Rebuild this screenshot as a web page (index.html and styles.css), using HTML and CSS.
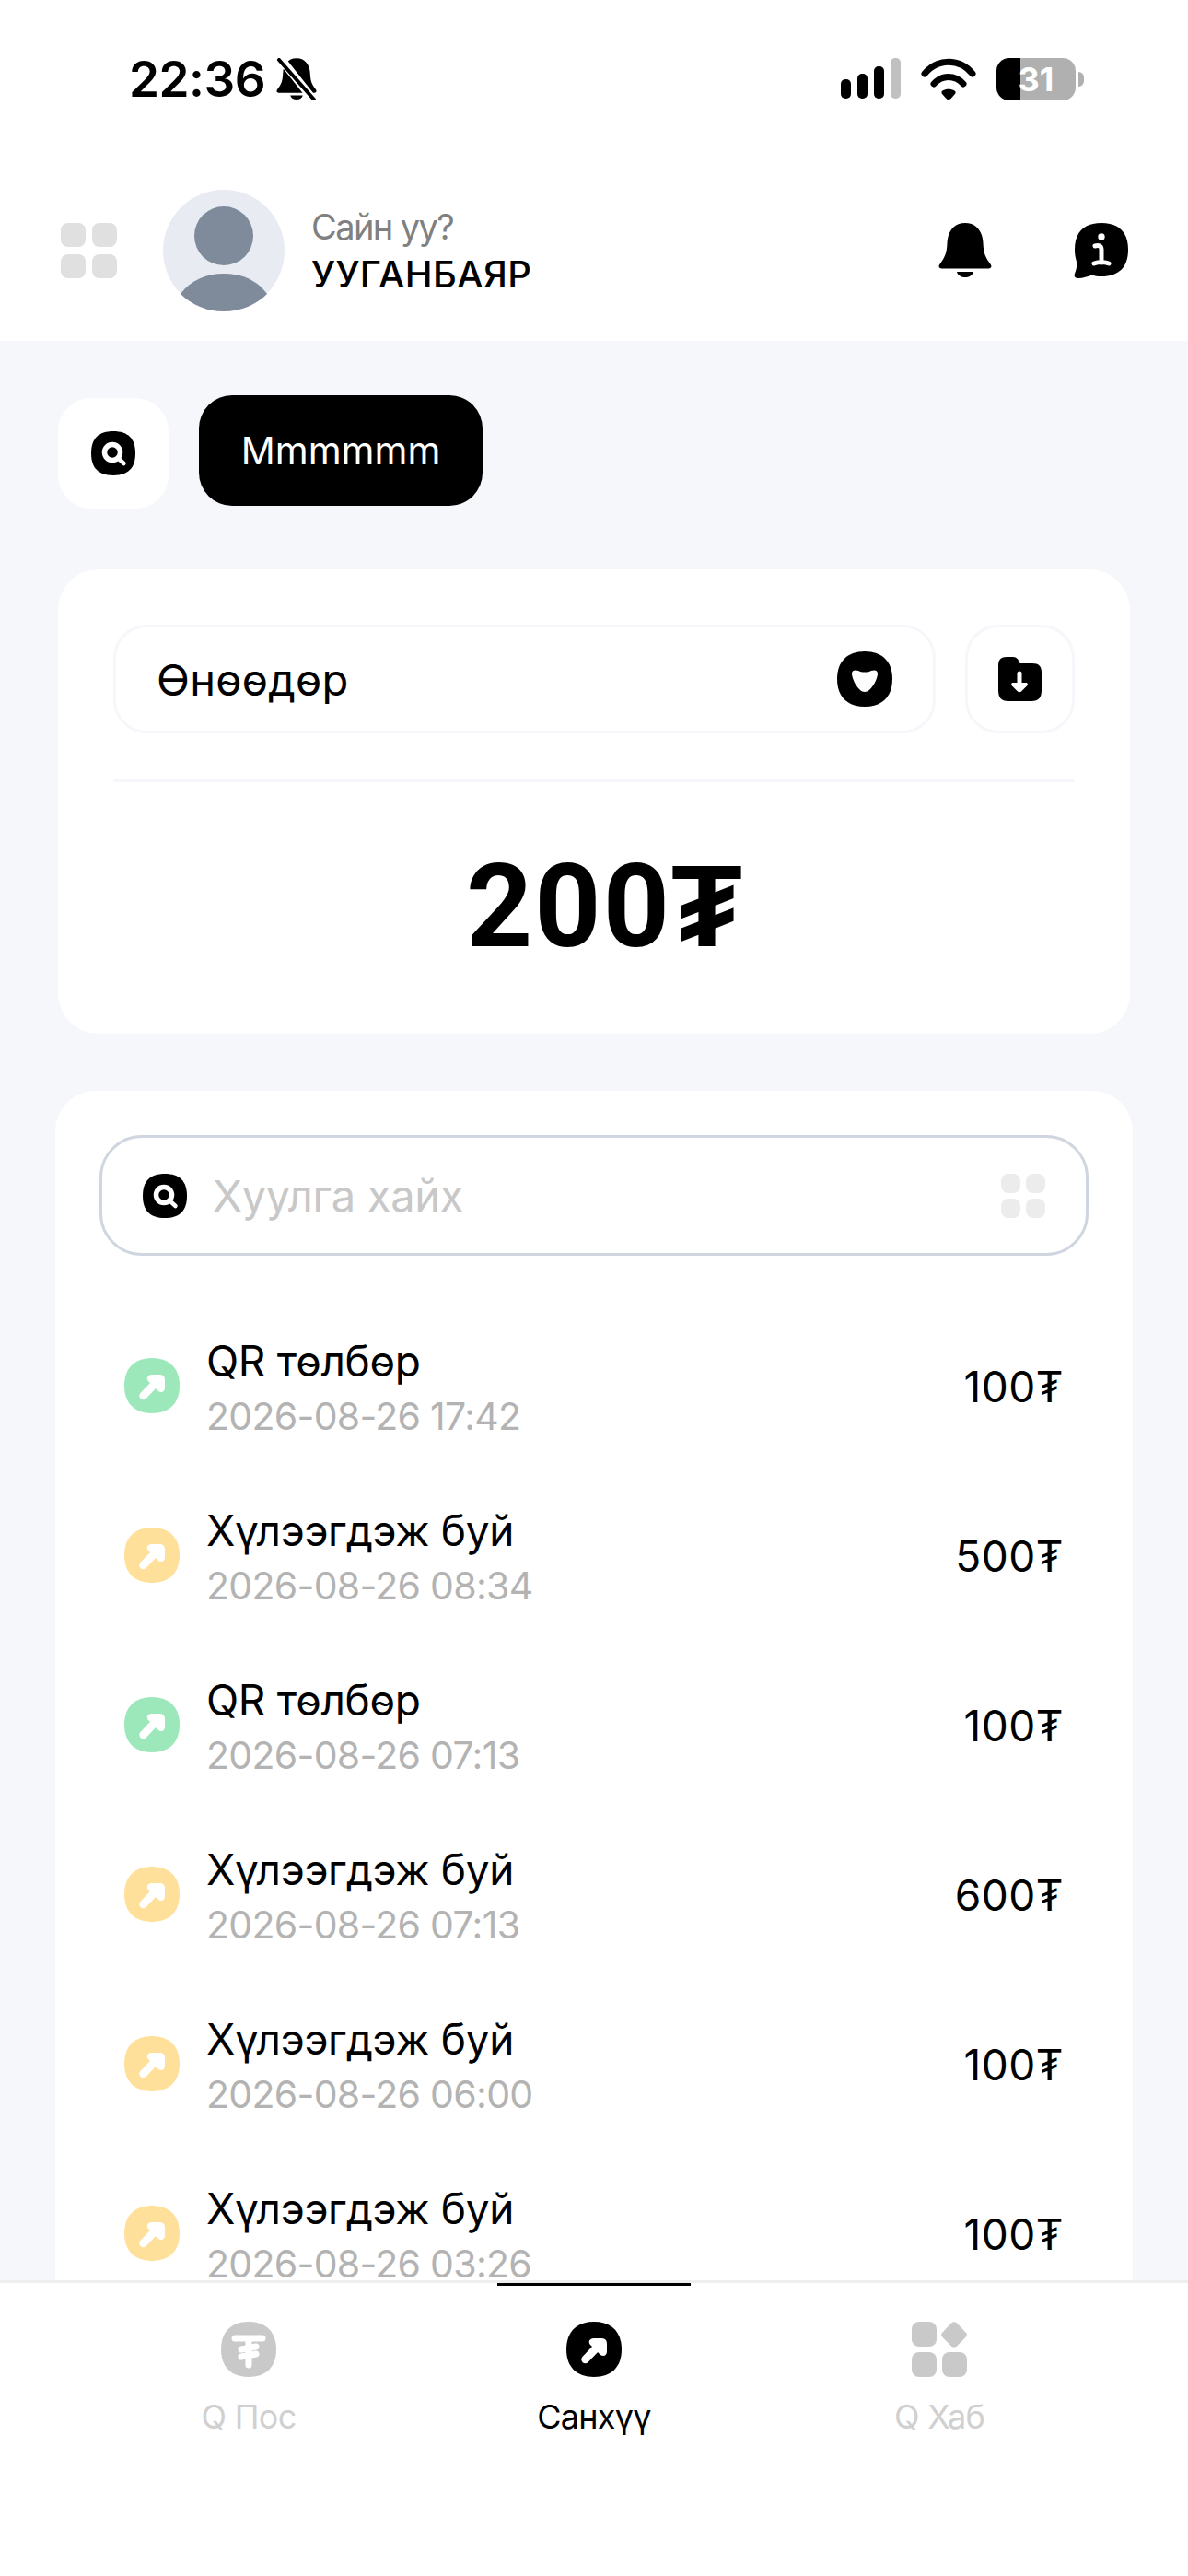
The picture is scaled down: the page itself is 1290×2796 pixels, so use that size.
FILE: index.html
```html
<!DOCTYPE html>
<html lang="mn">
<head>
    <meta charset="UTF-8">
    <meta name="viewport" content="width=device-width, initial-scale=1.0">
    <title>Санхүү</title>
    <link rel="stylesheet" href="styles.css">
</head>
<body>
    <!-- shared icons -->
    <svg class="defs" xmlns="http://www.w3.org/2000/svg">
        <symbol id="q" viewBox="0 0 48 48">
            <path d="M24 0C40 0 48 8 48 24C48 40 40 48 24 48C8 48 0 40 0 24C0 8 8 0 24 0Z"/>
            <circle cx="23" cy="23" r="8.500" fill="none" stroke="#fff" stroke-width="5.500"/>
            <path d="M30 30L35.500 35" fill="none" stroke="#fff" stroke-width="4.500" stroke-linecap="round"/>
        </symbol>
        <symbol id="arrow" viewBox="0 0 60 60">
            <path d="M30 0C49 0 60 11 60 30C60 49 49 60 30 60C11 60 0 49 0 30C0 11 11 0 30 0Z"/>
            <path d="M20.500 41L31 30" fill="none" stroke="#fff" stroke-width="8.500" stroke-linecap="round"/>
            <path d="M30 18H38C42 18 44 20 44 24V32C44 36.500 40.500 38.500 37 36L26.500 25.500C23 22 25 18 30 18Z" fill="#fff"/>
        </symbol>
        <symbol id="bell" viewBox="0 0 58 60">
            <path d="M29 0C42 0 48 10 48.500 22C49 33 51 37 56 44C59 48 57 49.500 53 49.500H5C1 49.500 -1 48 2 44C7 37 9 33 9.500 22C10 10 16 0 29 0Z"/>
            <path d="M20 53H38C36 61 22 61 20 53Z"/>
        </symbol>
    </svg>

    <div class="screen">
        <header class="top">
            <div class="status">
                <div class="status-left">
                    <span class="time">22:36</span>
                    <svg class="mute" viewBox="0 0 44 46">
                        <use href="#bell" x="0" y="0" width="44" height="46"/>
                        <path d="M5 1L40 45" stroke="#fff" stroke-width="9"/>
                        <path d="M3 2L41 45" stroke="#000" stroke-width="4" stroke-linecap="round"/>
                    </svg>
                </div>
                <div class="status-right">
                    <div class="signal"><i></i><i></i><i></i><i></i></div>
                    <svg class="wifi" viewBox="0 0 60 45">
                        <path d="M4 17C18 0 42 0 56 17" fill="none" stroke="#000" stroke-width="7" stroke-linecap="round"/>
                        <path d="M14 28C23 18 37 18 46 28" fill="none" stroke="#000" stroke-width="7" stroke-linecap="round"/>
                        <path d="M30 45C29 45 28 44.500 27 43.500L23.500 39.500C22 38 22 36.500 23.500 35.500C27 33 33 33 36.500 35.500C38 36.500 38 38 36.500 39.500L33 43.500C32 44.500 31 45 30 45Z"/>
                    </svg>
                    <div class="battery">31</div>
                </div>
            </div>
            <div class="user-row">
                <div class="dots">
                    <i></i><i></i><i></i><i></i>
                </div>
                <svg class="avatar" viewBox="0 0 132 132">
                    <circle cx="66" cy="66" r="66" fill="#e8ebf2"/>
                    <ellipse cx="66" cy="50" rx="32" ry="32" fill="#7f8a9b"/>
                    <path d="M19 113C30 98 47 91 66 91C85 91 102 98 113 113C101 125 84 132 66 132C48 132 31 125 19 113Z" fill="#7f8a9b"/>
                </svg>
                <div class="user-text">
                    <span class="hello">Сайн уу?</span>
                    <span class="user-name">УУГАНБАЯР</span>
                </div>
                <div class="top-actions">
                    <svg class="top-icon"><use href="#bell"/></svg>
                    <svg class="top-icon" viewBox="0 0 60 60">
                        <path d="M31 0C50 0 60 10 60 29C60 48 50 58 31 58C27 58 24 57.500 21 56.500C16 58 11 60 6 60C2 60 1 58 2 55C4 50 5 45 3.500 40C2.500 37 2 33 2 29C2 10 12 0 31 0Z"/>
                        <circle cx="31" cy="15" r="3.700" fill="#fff"/>
                        <path d="M24 25C28 24 31 24.500 31 29V43M23 44C28 42 34 42 39 44" fill="none" stroke="#fff" stroke-width="5" stroke-linecap="round"/>
                    </svg>
                </div>
            </div>
        </header>

        <main class="main">
            <div class="chips">
                <div class="chip-search"><svg class="icon-q"><use href="#q"/></svg></div>
                <div class="chip-store">Mmmmmm</div>
            </div>

            <section class="card card-total">
                <div class="filter-row">
                    <div class="filter">
                        <span>Өнөөдөр</span>
                        <svg class="filter-icon" viewBox="0 0 60 60">
                            <path d="M30 0C49 0 60 11 60 30C60 49 49 60 30 60C11 60 0 49 0 30C0 11 11 0 30 0Z"/>
                            <path d="M16 24C16 20 20 20 23 21C27 23 33 23 37 21C40 20 44 20 44 24C44 30 37 44 30 44C23 44 16 30 16 24Z" fill="#fff"/>
                        </svg>
                    </div>
                    <div class="export">
                        <svg class="export-icon" viewBox="0 0 47 48">
                            <path d="M0 9C0 3 3 0 9 0H16C20 0 22 3 23.500 7H37C44 7 47 10 47 17V36C47 44 44 48 36 48H11C3 48 0 44 0 36Z"/>
                            <path d="M23 18V30" fill="none" stroke="#fff" stroke-width="5" stroke-linecap="round"/>
                            <path d="M16 28H30C32 28 32.500 30 31 31.500L25 37.500C24 38.500 22 38.500 21 37.500L15 31.500C13.500 30 14 28 16 28Z" fill="#fff"/>
                        </svg>
                    </div>
                </div>
                <div class="total">200₮</div>
            </section>

            <section class="card card-list">
                <div class="search">
                    <svg class="icon-q"><use href="#q"/></svg>
                    <span class="placeholder">Хуулга хайх</span>
                    <div class="dots dots-small">
                        <i></i><i></i><i></i><i></i>
                    </div>
                </div>
                <div class="rows">
                    <div class="row">
                        <svg class="row-icon green"><use href="#arrow"/></svg>
                        <div class="row-text"><span class="row-title">QR төлбөр</span><span class="row-date">2026-08-26 17:42</span></div>
                        <span class="row-amount">100₮</span>
                    </div>
                    <div class="row">
                        <svg class="row-icon yellow"><use href="#arrow"/></svg>
                        <div class="row-text"><span class="row-title">Хүлээгдэж буй</span><span class="row-date">2026-08-26 08:34</span></div>
                        <span class="row-amount">500₮</span>
                    </div>
                    <div class="row">
                        <svg class="row-icon green"><use href="#arrow"/></svg>
                        <div class="row-text"><span class="row-title">QR төлбөр</span><span class="row-date">2026-08-26 07:13</span></div>
                        <span class="row-amount">100₮</span>
                    </div>
                    <div class="row">
                        <svg class="row-icon yellow"><use href="#arrow"/></svg>
                        <div class="row-text"><span class="row-title">Хүлээгдэж буй</span><span class="row-date">2026-08-26 07:13</span></div>
                        <span class="row-amount">600₮</span>
                    </div>
                    <div class="row">
                        <svg class="row-icon yellow"><use href="#arrow"/></svg>
                        <div class="row-text"><span class="row-title">Хүлээгдэж буй</span><span class="row-date">2026-08-26 06:00</span></div>
                        <span class="row-amount">100₮</span>
                    </div>
                    <div class="row">
                        <svg class="row-icon yellow"><use href="#arrow"/></svg>
                        <div class="row-text"><span class="row-title">Хүлээгдэж буй</span><span class="row-date">2026-08-26 03:26</span></div>
                        <span class="row-amount">100₮</span>
                    </div>
                </div>
            </section>
        </main>

        <nav class="nav">
            <div class="nav-item">
                <svg class="nav-icon" viewBox="0 0 60 60">
                    <path d="M30 0C49 0 60 11 60 30C60 49 49 60 30 60C11 60 0 49 0 30C0 11 11 0 30 0Z" fill="#c9c9c9"/>
                    <path d="M15 18H45M30 18V47M22 30L38 27M22 38L38 35" fill="none" stroke="#fff" stroke-width="7" stroke-linecap="round"/>
                </svg>
                <span>Q Пос</span>
            </div>
            <div class="nav-item active">
                <svg class="nav-icon"><use href="#arrow"/></svg>
                <span>Санхүү</span>
            </div>
            <div class="nav-item">
                <svg class="nav-icon" viewBox="0 0 60 60">
                    <g fill="#c9c9c9">
                        <rect x="0" y="0" width="27" height="27" rx="8"/>
                        <rect x="0" y="33" width="27" height="27" rx="8"/>
                        <rect x="33" y="33" width="27" height="27" rx="8"/>
                        <path d="M42.500 2C44.500 -0.500 47.500 -0.500 49.500 2L58 11C60.500 13 60.500 15 58 17.500L49.500 26C47.500 28 44.500 28 42.500 26L34 17.500C31.500 15 31.500 13 34 11Z"/>
                    </g>
                </svg>
                <span>Q Хаб</span>
            </div>
        </nav>
    </div>
</body>
</html>
```

FILE: styles.css
```css
* {
    margin: 0;
    padding: 0;
    box-sizing: border-box;
}

body {
    font-family: 'Inter', 'Noto Sans', sans-serif;
    color: #000;
    background: #f5f7fb;
}

.defs {
    display: none;
}

.screen {
    width: 1290px;
    height: 2796px;
    display: flex;
    flex-direction: column;
    overflow: hidden;
}

/* Status bar and user row */
.top {
    height: 370px;
    flex-shrink: 0;
    background: #fff;
}

.status {
    height: 206px;
    padding: 63px 122px 0 140px;
    display: flex;
    justify-content: space-between;
    align-items: flex-start;
}

.status-left {
    display: flex;
    align-items: center;
    gap: 12px;
    height: 46px;
}

.time {
    font-size: 53px;
    font-weight: 600;
    line-height: 46px;
    letter-spacing: -0.5px;
}

.mute {
    width: 44px;
    height: 46px;
}

.status-right {
    display: flex;
    align-items: flex-start;
}

.signal {
    display: flex;
    align-items: flex-end;
    gap: 7px;
    height: 44px;
    margin-right: 22px;
}

.signal i {
    display: block;
    width: 11px;
    border-radius: 5px;
    background: #000;
}

.signal i:nth-child(1) { height: 21px; }
.signal i:nth-child(2) { height: 27px; }
.signal i:nth-child(3) { height: 35px; }
.signal i:nth-child(4) { height: 44px; background: #c0c0c0; }

.wifi {
    width: 60px;
    height: 45px;
    margin-right: 22px;
}

.battery {
    position: relative;
    width: 86px;
    height: 46px;
    border-radius: 14px;
    background: linear-gradient(90deg, #000 26px, #b0b0b0 26px);
    color: #fff;
    font-size: 36px;
    font-weight: 700;
    line-height: 46px;
    text-align: center;
}

.battery::after {
    content: '';
    position: absolute;
    left: 89px;
    top: 15px;
    width: 6px;
    height: 16px;
    border-radius: 0 6px 6px 0;
    background: #b0b0b0;
}

.user-row {
    display: flex;
    align-items: center;
    padding: 0 65px 0 66px;
    height: 132px;
}

.dots {
    display: grid;
    grid-template-columns: 27px 27px;
    grid-auto-rows: 26px;
    gap: 8px 7px;
}

.dots i {
    display: block;
    background: #e0e0e0;
    border-radius: 8px;
}

.avatar {
    width: 132px;
    height: 132px;
    margin-left: 50px;
}

.user-text {
    display: flex;
    flex-direction: column;
    margin-left: 29px;
    flex: 1;
}

.hello {
    font-size: 38px;
    line-height: 50px;
    color: #808080;
    letter-spacing: -1.6px;
}

.user-name {
    font-size: 40px;
    font-weight: 500;
    line-height: 50px;
    margin-top: 2px;
    letter-spacing: 0.4px;
}

.top-actions {
    display: flex;
    align-items: center;
    gap: 87px;
}

.top-icon {
    width: 60px;
    height: 60px;
}

/* Main area */
.main {
    flex: 1;
    min-height: 0;
    overflow: hidden;
    padding-top: 59px;
}

.chips {
    display: flex;
    align-items: flex-start;
    gap: 33px;
    padding-left: 63px;
}

.chip-search {
    width: 120px;
    height: 120px;
    margin-top: 3px;
    display: flex;
    align-items: center;
    justify-content: center;
    background: #fff;
    border-radius: 36px;
}

.icon-q {
    width: 48px;
    height: 48px;
    flex-shrink: 0;
}

.chip-store {
    width: 308px;
    height: 120px;
    display: flex;
    align-items: center;
    justify-content: center;
    background: #000;
    color: #fff;
    border-radius: 36px;
    font-size: 41px;
}

.card {
    background: #fff;
    border-radius: 44px;
}

.card-total {
    height: 504px;
    margin: 66px 63px 0;
    padding: 60px 60px 0;
}

.filter-row {
    display: flex;
    gap: 32px;
    padding-bottom: 50px;
    border-bottom: 3px solid #f5f7fb;
}

.filter {
    flex: 1;
    height: 118px;
    display: flex;
    align-items: center;
    justify-content: space-between;
    padding: 0 44px 0 44px;
    border: 3px solid #f5f7fb;
    border-radius: 36px;
    font-size: 47px;
    letter-spacing: 0.3px;
}

.filter-icon {
    width: 60px;
    height: 60px;
}

.export {
    width: 119px;
    height: 118px;
    display: flex;
    align-items: center;
    justify-content: center;
    border: 3px solid #f5f7fb;
    border-radius: 36px;
}

.export-icon {
    width: 47px;
    height: 48px;
}

.total {
    margin-top: 62px;
    padding-left: 24px;
    text-align: center;
    font-family: 'Roboto', sans-serif;
    font-size: 126px;
    font-weight: 700;
    line-height: 146px;
    letter-spacing: 2px;
}

.card-list {
    margin: 62px 60px 0;
    padding: 48px 48px 0;
    border-radius: 44px 44px 0 0;
}

.search {
    height: 131px;
    display: flex;
    align-items: center;
    padding: 0 44px;
    border: 3px solid #d0d6e0;
    border-radius: 46px;
}

.placeholder {
    flex: 1;
    margin-left: 28px;
    font-size: 47px;
    letter-spacing: -0.3px;
    color: #c8c8c8;
}

.dots-small {
    grid-template-columns: 21px 21px;
    grid-auto-rows: 21px;
    gap: 6px;
}

.dots-small i {
    background: #ececec;
}

.rows {
    margin-top: 49px;
}

.row {
    height: 184px;
    display: flex;
    align-items: center;
    padding: 0 27px 0 27px;
}

.row-icon {
    width: 60px;
    height: 60px;
    flex-shrink: 0;
}

.green { fill: #9de8bb; }
.yellow { fill: #ffe09a; }

.row-text {
    flex: 1;
    display: flex;
    flex-direction: column;
    margin-left: 29px;
    padding-top: 6px;
}

.row-title {
    font-size: 46px;
    line-height: 60px;
    letter-spacing: -0.3px;
}

.row-date {
    font-size: 41px;
    line-height: 60px;
    letter-spacing: -0.7px;
    color: #b3b3b3;
}

.row-amount {
    font-size: 46px;
    font-weight: 400;
    letter-spacing: 0.5px;
    padding-top: 2px;
}

/* Bottom tabs */
.nav {
    position: relative;
    height: 321px;
    flex-shrink: 0;
    display: grid;
    grid-template-columns: repeat(3, 375px);
    justify-content: center;
    background: #fff;
    border-top: 3px solid #eeeeee;
    padding-top: 42px;
}

.nav::before {
    content: '';
    position: absolute;
    left: 540px;
    top: 0;
    width: 210px;
    height: 3px;
    background: #000;
}

.nav-item {
    display: flex;
    flex-direction: column;
    align-items: center;
    gap: 21px;
    font-size: 36px;
    line-height: 44px;
    letter-spacing: -0.7px;
    color: #d0d0d0;
}

.nav-item.active {
    color: #000;
}

.nav-icon {
    width: 60px;
    height: 60px;
}
```
